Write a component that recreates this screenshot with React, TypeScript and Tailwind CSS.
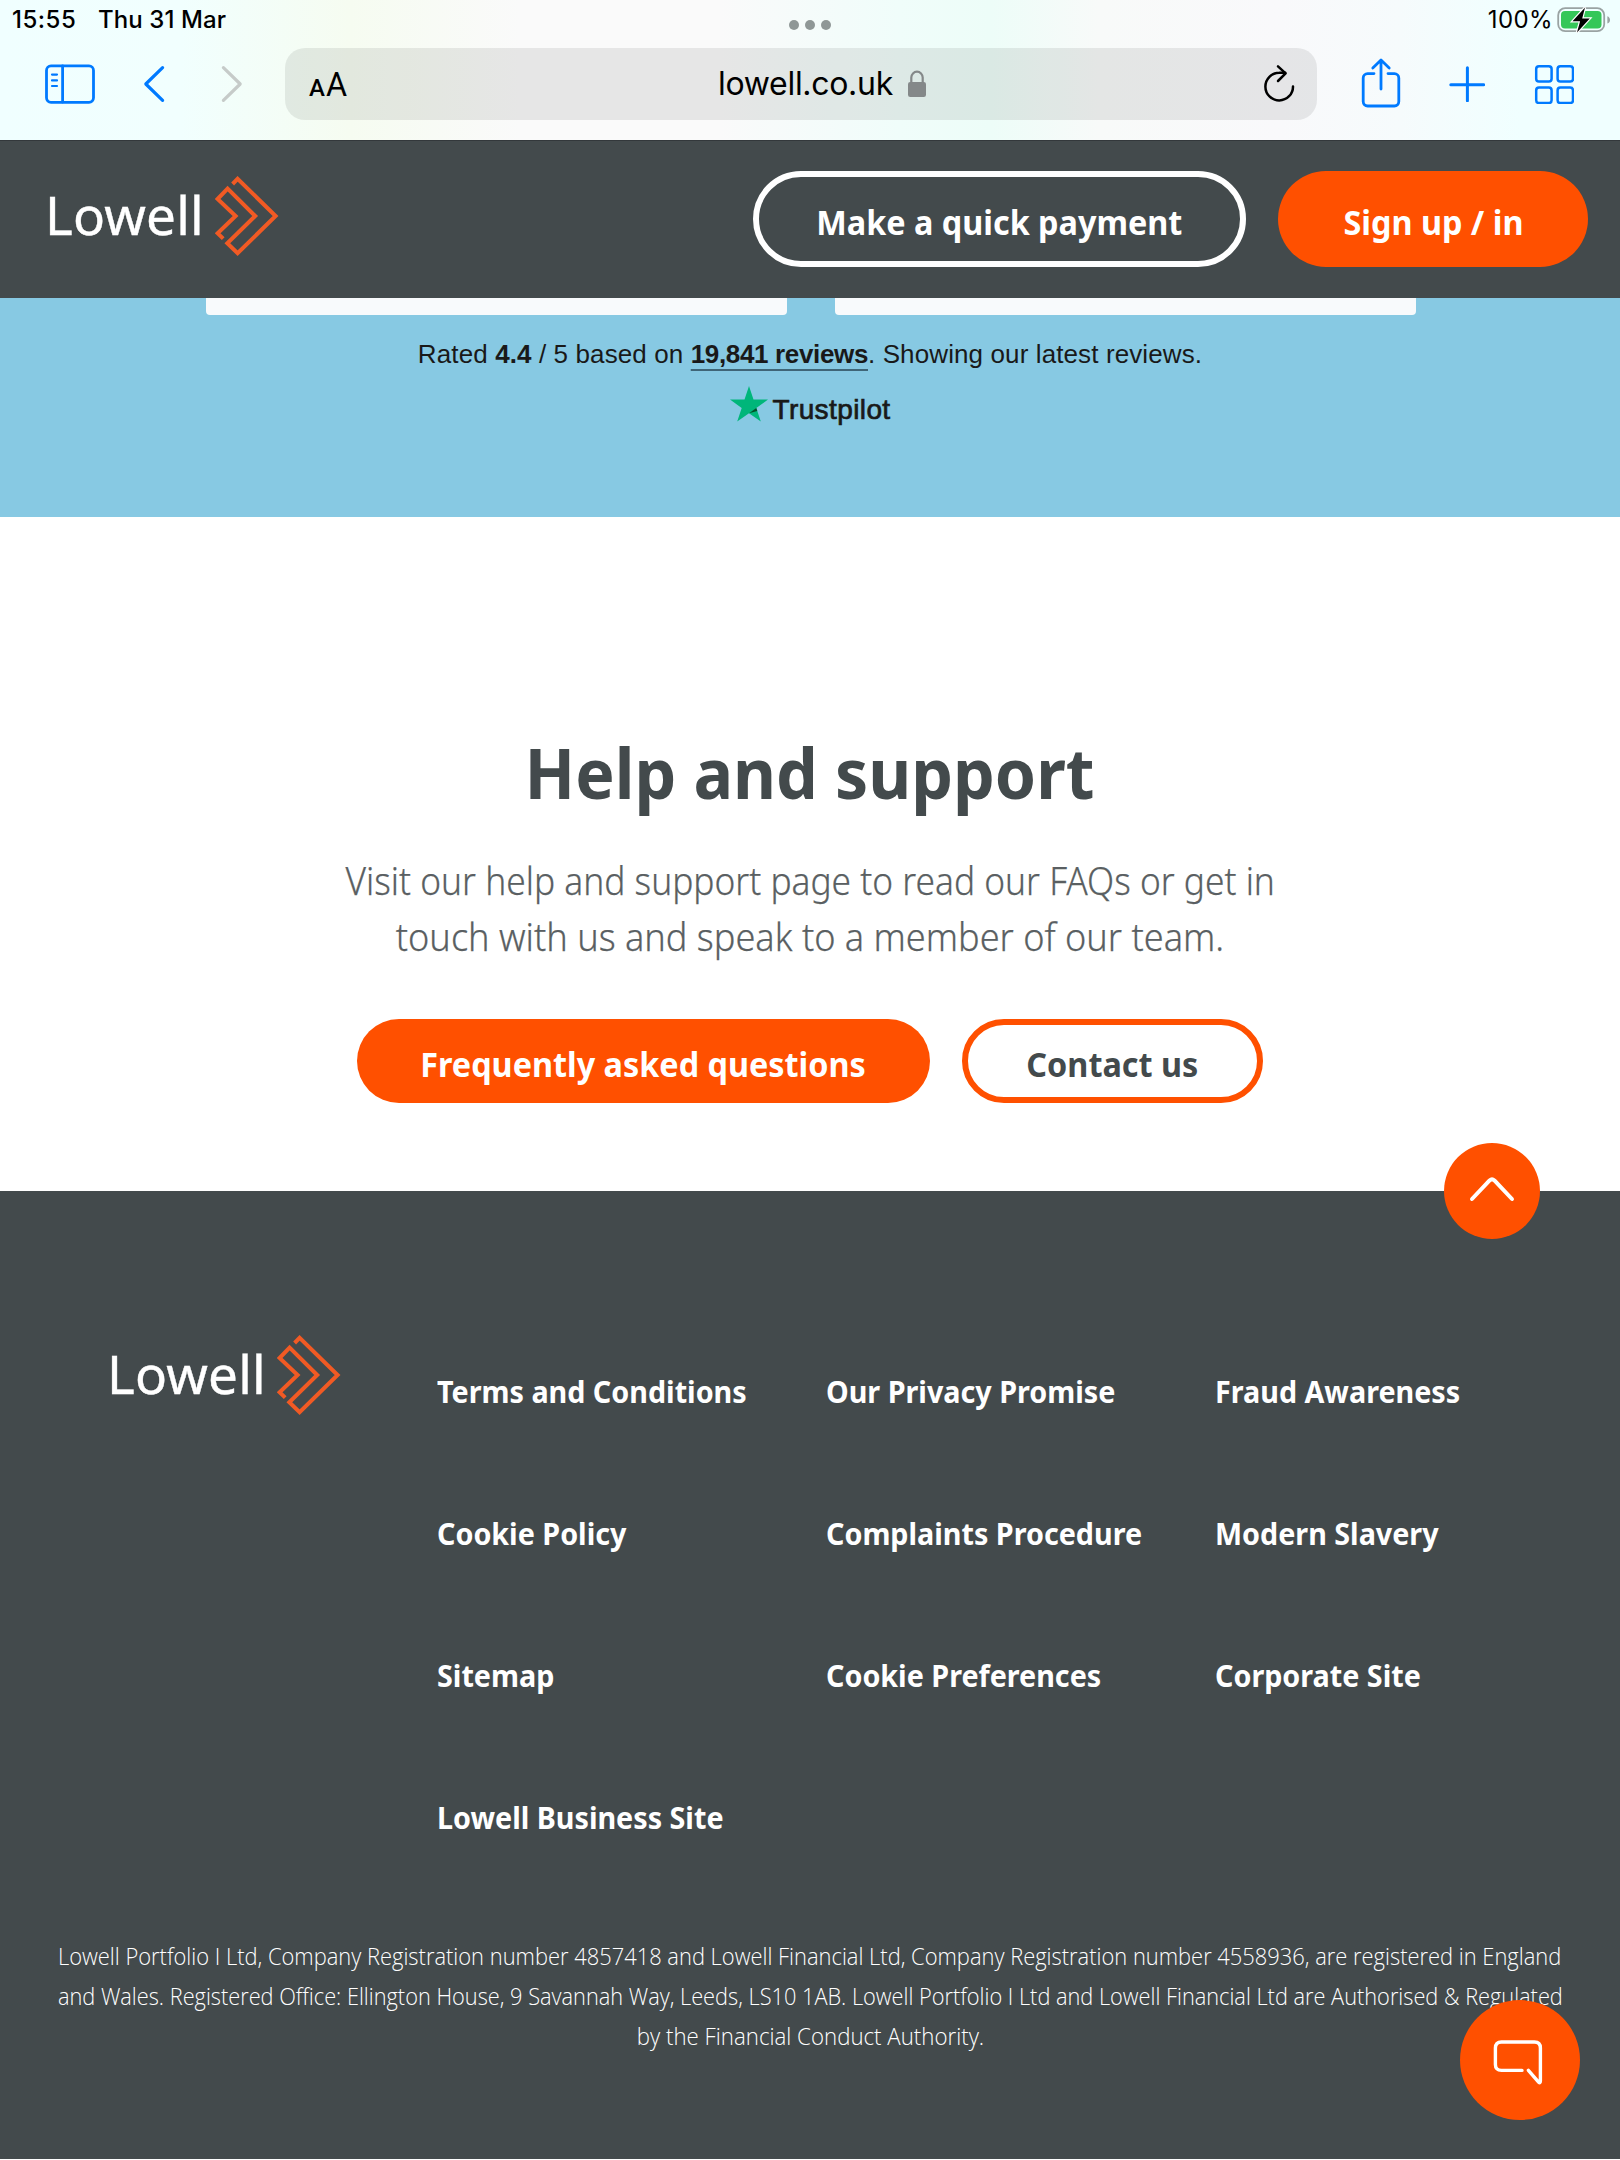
import type { ReactNode } from "react";

const links = [
  "Terms and Conditions", "Our Privacy Promise", "Fraud Awareness",
  "Cookie Policy", "Complaints Procedure", "Modern Slavery",
  "Sitemap", "Cookie Preferences", "Corporate Site",
  "Lowell Business Site",
];

function Logo() {
  return (
    <div className="flex h-20 items-center">
      <span className="-mt-[3px] w-[170px] text-[53px] leading-none tracking-[0.2px] text-white [-webkit-text-stroke:0.4px_white]">Lowell</span>
      <svg width="64" height="80" viewBox="0 0 64 80" fill="none" stroke="#f15a24" strokeWidth="4">
        <path d="M17.6 8 22.6 2.8 60.6 40 22.6 77.2 12.3 67.2 40.2 40 12.6 12.7 2.6 23 20.6 40 2.6 57.3 8.2 62.6" />
      </svg>
    </div>
  );
}

function Pill({ className, children }: { className: string; children: ReactNode }) {
  return (
    <button className={`flex items-center justify-center rounded-full pt-[6px] text-[34px] font-bold leading-none whitespace-nowrap ${className}`}>
      <span className="scale-x-[0.952]">{children}</span>
    </button>
  );
}

function BrowserChrome() {
  return (
    <div className="h-[140px] bg-[linear-gradient(90deg,#f0ffff_0px,#f1fffe_180px,#f6fcf1_350px,#fafafa_520px,#fafafa_720px,#f0fdfa_900px,#edfdf8_990px,#f8faf9_1100px,#f9f9fb_1280px,#f6fbfc_1400px,#f0ffff_1520px,#f0ffff_1620px)] font-['Inter',sans-serif] text-black">
      <div className="relative flex h-[40px] items-center pr-[9px] pl-[12px] text-[24px] leading-none font-medium">
        <span className="w-[86px] tracking-[0.5px]">15:55</span>
        <span className="tracking-[0.1px]">Thu 31 Mar</span>
        <span className="ml-auto font-normal tracking-[0.4px]">100%</span>
        <svg className="ml-[4px]" width="54" height="26" viewBox="0 0 54 26">
          <rect x="1.2" y="1.2" width="46" height="23" rx="7" fill="none" stroke="#9aa3a3" strokeWidth="1.8" />
          <rect x="4" y="4" width="40.5" height="17.5" rx="4" fill="#34c759" />
          <path d="M50.4 9.3c1.6.6 2.6 1.9 2.6 3.6s-1 3-2.6 3.6z" fill="#9aa3a3" />
          <path d="M28 .5 15.5 14.2h7.6L20 25.4 32.8 11.4h-7.6z" fill="#000" stroke="#fff" strokeWidth="2.4" paintOrder="stroke" />
        </svg>
        <div className="absolute top-5 left-[789px] flex gap-[6px]">
          <i className="size-[10px] rounded-full bg-[#8f9796]" />
          <i className="size-[10px] rounded-full bg-[#8f9796]" />
          <i className="size-[10px] rounded-full bg-[#8f9796]" />
        </div>
      </div>
      <div className="mt-[8px] flex h-[72px] items-center pl-[45px] text-[#007aff]">
        <svg width="50" height="40" viewBox="0 0 50 40" fill="none" stroke="currentColor" strokeWidth="2.8" strokeLinecap="round">
          <rect x="1.5" y="1.9" width="47" height="36.4" rx="4.5" />
          <path d="M17.6 2v36" />
          <path d="M7 10.6h5M7 16.4h5M7 22h5" strokeWidth="2.2" />
        </svg>
        <svg className="ml-[48px]" width="22" height="38" viewBox="0 0 22 38" fill="none" stroke="currentColor" strokeWidth="3.2" strokeLinecap="round" strokeLinejoin="round">
          <path d="M19.6 2.6 2.8 19l16.8 16.4" />
        </svg>
        <svg className="ml-[56px] text-[#c6cbc9]" width="22" height="38" viewBox="0 0 22 38" fill="none" stroke="currentColor" strokeWidth="3.2" strokeLinecap="round" strokeLinejoin="round">
          <path d="M2.4 2.6 19.2 19 2.4 35.4" />
        </svg>
        <div className="ml-[42px] flex h-[72px] w-[1032px] items-center rounded-[20px] bg-black/8 pr-[22px] pl-6 text-black">
          <span className="w-[409px] font-['Roboto',sans-serif] leading-none">
            <span className="text-[24px] font-medium">A</span>
            <span className="ml-px inline-block origin-left scale-x-[0.95] text-[34px]">A</span>
          </span>
          <span className="text-[32px] leading-none tracking-[-0.3px]">lowell.co.uk</span>
          <svg className="ml-[14px]" width="20" height="28" viewBox="0 0 20 28">
            <rect x="1" y="12" width="18" height="15" rx="2.2" fill="#848889" />
            <path d="M4.3 13V7.6a5.7 5.9 0 0 1 11.4 0V13" fill="none" stroke="#848889" strokeWidth="2.2" />
          </svg>
          <svg className="-mt-[2px] ml-auto" width="32" height="40" viewBox="0 0 32 40" fill="none" stroke="currentColor" strokeWidth="2.5" strokeLinecap="round" strokeLinejoin="round">
            <path d="M30 23.4A13.8 13.8 0 1 1 16.2 9.8c2.2-.2 4.2-.1 6 0" />
            <path d="M15 3.4 22.6 10.4 15 18" />
          </svg>
        </div>
        <svg className="-mt-[2px] ml-[44px]" width="40" height="50" viewBox="0 0 40 50" fill="none" stroke="currentColor" strokeWidth="2.8" strokeLinecap="round" strokeLinejoin="round">
          <path d="M13 15.6H6.6a4.4 4.4 0 0 0-4.4 4.4v23.6A4.4 4.4 0 0 0 6.6 48h26.8a4.4 4.4 0 0 0 4.4-4.4V20a4.4 4.4 0 0 0-4.4-4.4H27" />
          <path d="M20 31V2.2M11.8 10 20 2l8.2 8" />
        </svg>
        <svg className="ml-[48px]" width="36" height="36" viewBox="0 0 36 36" fill="none" stroke="currentColor" strokeWidth="3" strokeLinecap="round">
          <path d="M18.4 1.8v33M1.8 18.7h33" />
        </svg>
        <svg className="ml-[49px]" width="40" height="40" viewBox="0 0 40 40" fill="none" stroke="currentColor" strokeWidth="2.5">
          <rect x="2.2" y="2.2" width="15.4" height="15.4" rx="2.8" />
          <rect x="23.6" y="2.2" width="15.4" height="15.4" rx="2.8" />
          <rect x="2.2" y="23.6" width="15.4" height="15.4" rx="2.8" />
          <rect x="23.6" y="23.6" width="15.4" height="15.4" rx="2.8" />
        </svg>
      </div>
    </div>
  );
}

export default function App() {
  return (
    <div className="h-[2160px] w-[1620px] overflow-hidden bg-white font-['Noto_Sans',sans-serif]">
      <BrowserChrome />

      <header className="flex h-[158px] items-center border-t border-[#33383b] bg-[#434a4c] pr-8 pb-px pl-[45px]">
        <div className="-mt-[6px]"><Logo /></div>
        <Pill className="ml-auto h-24 w-[493px] border-[6px] border-white text-white">Make a quick payment</Pill>
        <Pill className="ml-8 h-24 w-[310px] bg-[#ff5000] text-white">Sign up / in</Pill>
      </header>

      <section className="flex h-[219px] flex-col items-center bg-[#87c9e3] font-['Liberation_Sans',sans-serif] text-[#191919]">
        <div className="flex gap-12 pl-[2px]">
          <div className="h-[17px] w-[581px] rounded-b-[4px] bg-[#f8fafc]" />
          <div className="h-[17px] w-[581px] rounded-b-[4px] bg-[#f8fafc]" />
        </div>
        <p className="mt-[21px] text-[26px] leading-9 tracking-[0.11px] whitespace-nowrap">
          Rated <b>4.4</b> / 5 based on{" "}
          <b className="tracking-[-0.35px] underline decoration-[#3f6577] decoration-2 underline-offset-[6px] [text-decoration-skip-ink:none]">19,841 reviews</b>. Showing our latest reviews.
        </p>
        <div className="mt-[14px] flex h-[35px] gap-1 pl-[3px]">
          <svg className="-ml-[2px]" width="38" height="36" viewBox="0 0 38 36">
            <path d="M19 0l4.5 13.6H38L26.3 22l4.5 13.6L19 27.2 7.2 35.6 11.7 22 0 13.6h14.5z" fill="#00b67a" />
            <path d="M27.3 25.1 26.3 22 19 27.2z" fill="#005128" />
          </svg>
          <span className="mt-[6px] text-[28px] leading-[35px] tracking-[0.4px] [-webkit-text-stroke:0.7px_#191919]">Trustpilot</span>
        </div>
      </section>

      <main className="flex h-[674px] flex-col items-center pt-[205px]">
        <h1 className="scale-x-[0.945] text-[70px] leading-[100px] font-bold whitespace-nowrap text-[#434a4c]">Help and support</h1>
        <div className="mt-[30px] flex flex-col items-center text-[38px] leading-[56px] font-light whitespace-nowrap text-[#5a5f62] [-webkit-text-stroke:0.25px_#5a5f62]">
          <p className="scale-x-[0.929]">Visit our help and support page to read our FAQs or get in</p>
          <p className="scale-x-[0.95]">touch with us and speak to a member of our team.</p>
        </div>
        <div className="mt-[55px] flex gap-8">
          <Pill className="h-[84px] w-[573px] bg-[#ff5000] text-white">Frequently asked questions</Pill>
          <Pill className="h-[84px] w-[301px] border-[6px] border-[#ff5000] text-[#434a4c]">Contact us</Pill>
        </div>
      </main>

      <footer className="relative h-[968px] bg-[#434a4c] pt-[130px] text-white">
        <button className="absolute -top-12 left-[1444px] flex size-24 items-center justify-center rounded-full bg-[#ff5000] pb-1">
          <svg width="48" height="28" viewBox="0 0 48 28" fill="none" stroke="#fff" strokeWidth="4" strokeLinecap="round" strokeLinejoin="round">
            <path d="M4 24 21.6 5.4Q24 3.2 26.4 5.4L44 24" />
          </svg>
        </button>
        <div className="flex pl-[107px]">
          <div className="mt-[14px] w-[329.5px] shrink-0"><Logo /></div>
          <nav className="grid grid-cols-[repeat(3,389px)] text-[30px] leading-[142px] font-bold whitespace-nowrap">
            {links.map((l) => (
              <a key={l} className="origin-left scale-x-[0.957]">{l}</a>
            ))}
          </nav>
        </div>
        <div className="mt-[47px] flex flex-col items-center font-['Open_Sans',sans-serif] text-[23px] leading-10 font-light whitespace-nowrap">
          <p className="scale-x-[0.952]">Lowell Portfolio I Ltd, Company Registration number 4857418 and Lowell Financial Ltd, Company Registration number 4558936, are registered in England</p>
          <p className="scale-x-[0.946]">and Wales. Registered Office: Ellington House, 9 Savannah Way, Leeds, LS10 1AB. Lowell Portfolio I Ltd and Lowell Financial Ltd are Authorised &amp; Regulated</p>
          <p className="scale-x-[0.968]">by the Financial Conduct Authority.</p>
        </div>
        <button className="absolute top-[809px] right-10 flex size-[120px] items-center justify-center rounded-full bg-[#ff5000]">
          <svg className="mt-1 -ml-1" width="50" height="46" viewBox="0 0 50 46" fill="none" stroke="#fff" strokeWidth="3.4" strokeLinecap="round" strokeLinejoin="round">
            <path d="M29 31.4H8.4Q2.4 31.4 2.4 25.4V9Q2.4 3 8.4 3H41.4Q47.4 3 47.4 9V42Q47.4 44.6 45.6 43.2L35.4 31.4" />
          </svg>
        </button>
      </footer>
    </div>
  );
}
